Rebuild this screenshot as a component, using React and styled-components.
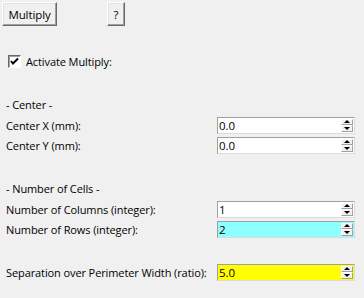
import React from 'react'
import styled, { createGlobalStyle } from 'styled-components';

const GlobalStyle = createGlobalStyle`
    html, body {
        margin: 0;
        padding: 0;
        background: #f0f0f0;
    }
    body {
        font-family: "Open Sans", "Noto Sans", sans-serif;
        font-size: 11px;
        color: #000;
    }
`

function SpinBox({ value, bg }) {
    return (
        <Spin bg={bg}>
            <SpinValue>{value}</SpinValue>
            <SpinButtons>
                <SpinButton><ArrowUp /></SpinButton>
                <SpinButton><ArrowDown /></SpinButton>
            </SpinButtons>
        </Spin>
    )
}

function App() {
    return (
        <Panel>
            <GlobalStyle />
            <Toolbar>
                <ToolButton>Multiply</ToolButton>
                <HelpButton>?</HelpButton>
            </Toolbar>

            <CheckRow>
                <CheckBox>
                    <svg width="9" height="9" viewBox="0 0 9 9">
                        <path d="M1 4 L3 6.5 L8 1.5" stroke="#000" strokeWidth="2" fill="none" />
                    </svg>
                </CheckBox>
                <span>Activate Multiply:</span>
            </CheckRow>

            <Spacer />
            <Header>- Center -</Header>
            <Row>
                <Label>Center X (mm):</Label>
                <SpinBox value="0.0" />
            </Row>
            <Row>
                <Label>Center Y (mm):</Label>
                <SpinBox value="0.0" />
            </Row>

            <Spacer />
            <Header>- Number of Cells -</Header>
            <Row>
                <Label>Number of Columns (integer):</Label>
                <SpinBox value="1" />
            </Row>
            <Row>
                <Label>Number of Rows (integer):</Label>
                <SpinBox value="2" bg="#8effff" />
            </Row>

            <Spacer />
            <Row>
                <Label>Separation over Perimeter Width (ratio):</Label>
                <SpinBox value="5.0" bg="#ffff00" />
            </Row>
        </Panel>
    )
}

export default App;

const Panel = styled.div`
    width: 364px;
    height: 298px;
    background: #f0f0f0;
    display: flex;
    flex-direction: column;
    box-sizing: border-box;
    overflow: hidden;
    letter-spacing: -0.1px;
`

const Toolbar = styled.div`
    display: flex;
    align-items: flex-start;
    padding: 2px 0 0 2px;
    height: 26px;
    box-sizing: border-box;
`

const ToolButton = styled.button`
    font-family: inherit;
    font-size: 11.5px;
    letter-spacing: inherit;
    height: 24px;
    width: 55px;
    padding: 0;
    margin: 0;
    background: #f0f0f0;
    color: #000;
    border: 1px solid;
    border-color: #ffffff #696969 #696969 #ffffff;
    box-shadow: inset -1px -1px 0 #a0a0a0, inset 1px 1px 0 #e3e3e3;
`

const HelpButton = styled(ToolButton)`
    width: 18px;
    margin-left: 50px;
`

const CheckRow = styled.div`
    display: flex;
    align-items: center;
    height: 20px;
    margin-top: 25px;
    padding-left: 8px;
    font-size: 11px;
    gap: 5px;
`

const CheckBox = styled.span`
    width: 13px;
    height: 13px;
    box-sizing: border-box;
    background: #fff;
    border: 1px solid;
    border-color: #696969 #ffffff #ffffff #696969;
    box-shadow: inset 1px 1px 0 #a0a0a0;
    display: flex;
    align-items: center;
    justify-content: center;
`

const Spacer = styled.div`
    height: 23px;
    flex: none;
`

const Header = styled.div`
    height: 21px;
    display: flex;
    align-items: center;
    padding-left: 6px;
    font-size: 11px;
`

const Row = styled.div`
    display: grid;
    grid-template-columns: 217px 138px;
    align-items: center;
    height: 20px;
`

const Label = styled.div`
    padding-left: 6px;
    font-size: 11px;
    white-space: nowrap;
`

const Spin = styled.div`
    height: 17px;
    box-sizing: border-box;
    display: flex;
    align-items: stretch;
    background: ${p => p.bg || '#ffffff'};
    border: 1px solid;
    border-color: #a0a0a0 #dcdcdc #dcdcdc #a0a0a0;
`

const SpinValue = styled.div`
    flex: 1;
    padding-left: 1px;
    font-size: 11.5px;
    line-height: 15px;
`

const SpinButtons = styled.div`
    width: 12px;
    display: flex;
    flex-direction: column;
    margin: 1px 1px 1px 0;
`

const SpinButton = styled.div`
    flex: 1;
    box-sizing: border-box;
    background: #f0f0f0;
    border: 1px solid;
    border-color: #ffffff #a0a0a0 #a0a0a0 #ffffff;
    display: flex;
    align-items: center;
    justify-content: center;
`

const ArrowUp = styled.span`
    width: 0;
    height: 0;
    border-left: 3px solid transparent;
    border-right: 3px solid transparent;
    border-bottom: 3px solid #000;
`

const ArrowDown = styled.span`
    width: 0;
    height: 0;
    border-left: 3px solid transparent;
    border-right: 3px solid transparent;
    border-top: 3px solid #000;
`
